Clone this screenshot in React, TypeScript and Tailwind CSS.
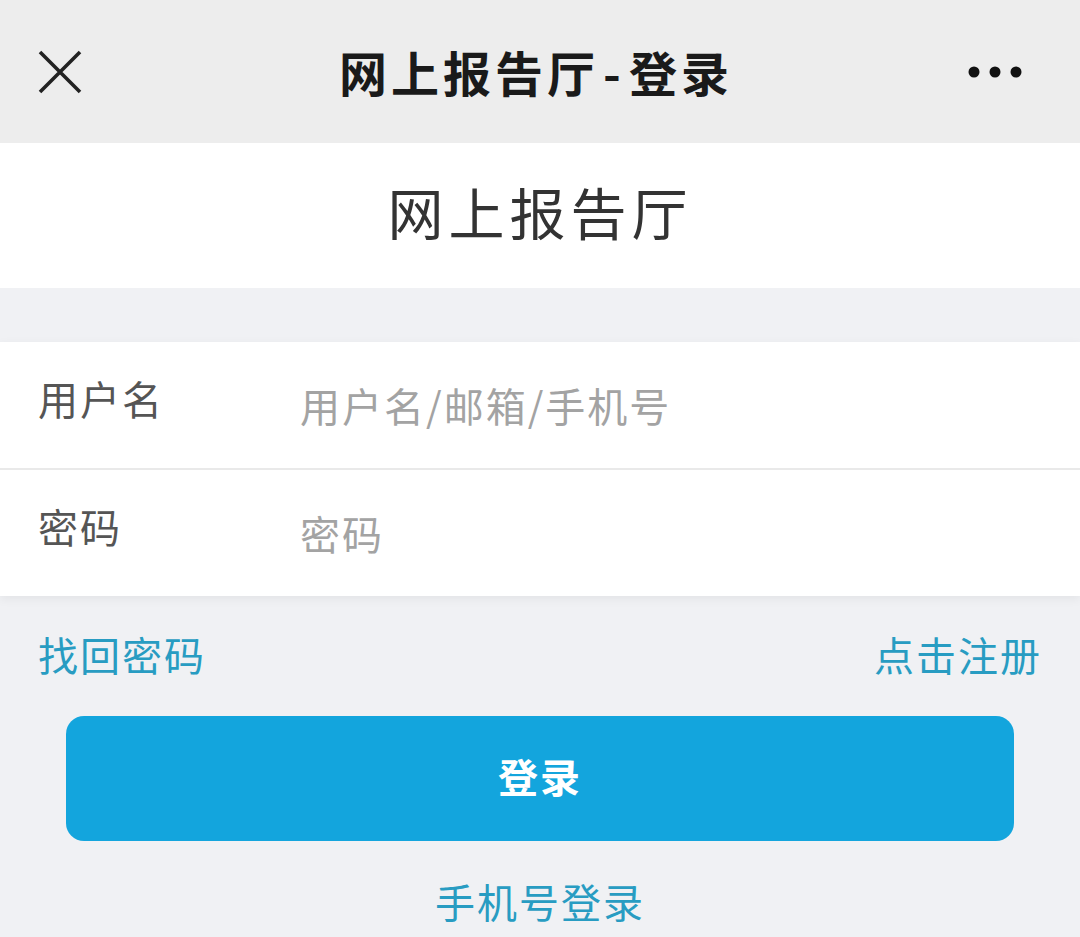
import React from "react";

const cjk = "font-['Noto_Sans_CJK_SC','Noto_Sans',sans-serif]";

function CloseIcon() {
  return (
    <svg width="44" height="44" viewBox="0 0 44 44" fill="none">
      <path d="M2 2 L42 42 M42 2 L2 42" stroke="#222" strokeWidth="3.6" />
    </svg>
  );
}

function MoreIcon() {
  return (
    <svg width="56" height="12" viewBox="0 0 56 12" fill="#111">
      <circle cx="6" cy="6" r="5.5" />
      <circle cx="27" cy="6" r="5.5" />
      <circle cx="48" cy="6" r="5.5" />
    </svg>
  );
}

function FormRow({ label, placeholder, type }: { label: string; placeholder: string; type?: string }) {
  return (
    <div className="flex items-center h-[126px] px-[38px]">
      <span className="w-[262px] text-[40px] tracking-[2px] text-[#555] pb-[14px]">{label}</span>
      <input
        type={type || "text"}
        placeholder={placeholder}
        className={`flex-1 bg-transparent outline-none text-[40px] tracking-[2px] text-[#333] placeholder:text-[#a3a3a3] ${cjk}`}
      />
    </div>
  );
}

export default function App() {
  return (
    <div className={`w-[1080px] h-[937px] overflow-hidden bg-[#f0f1f4] ${cjk}`}>
      {/* Top bar */}
      <div className="h-[143px] bg-[#ededed] flex items-center justify-between pl-[38px] pr-[56px]">
        <CloseIcon />
        <h1 className="text-[48px] font-bold tracking-[4px] text-[#1a1a1a] -mt-[2px] ml-[22px]">
          网上报告厅<span className="px-[4px]">-</span>登录
        </h1>
        <MoreIcon />
      </div>

      {/* Page heading */}
      <div className="h-[145px] bg-white flex items-center justify-center">
        <h2 className="text-[56px] tracking-[5px] text-[#333] pb-[10px]">网上报告厅</h2>
      </div>

      {/* Form card */}
      <div className="mt-[54px] bg-white shadow-[0_3px_10px_rgba(0,0,0,0.06)]">
        <FormRow label="用户名" placeholder="用户名/邮箱/手机号" />
        <div className="h-[2px] bg-[#e9e9e9]" />
        <FormRow label="密码" placeholder="密码" type="password" />
      </div>

      {/* Links */}
      <div className="flex items-center justify-between px-[38px] h-[116px] text-[40px] tracking-[2px] text-[#289cc2]">
        <a href="#">找回密码</a>
        <a href="#">点击注册</a>
      </div>

      {/* Login button */}
      <div className="px-[66px] mt-[4px]">
        <button className="w-full h-[125px] rounded-[18px] bg-[#13a5dd] text-white text-[40px] font-bold tracking-[2px] pb-[6px]">
          登录
        </button>
      </div>

      <div className="flex justify-center mt-[30px]">
        <a href="#" className="text-[40px] tracking-[2px] text-[#289cc2]">手机号登录</a>
      </div>
    </div>
  );
}
